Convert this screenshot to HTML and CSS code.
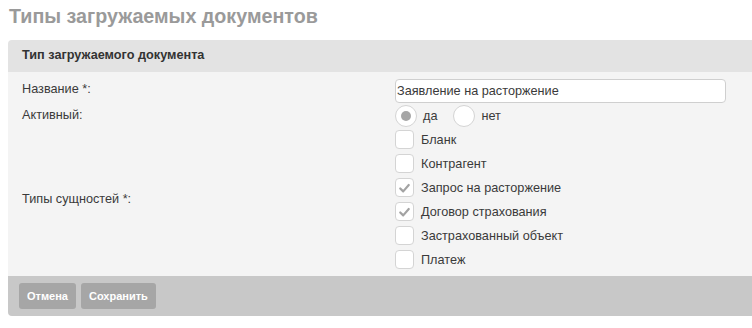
FILE: index.html
```html
<!DOCTYPE html>
<html lang="ru">
<head>
<meta charset="utf-8">
<link rel="stylesheet" href="styles.css">
</head>
<body>
<h1 class="page-title">Типы загружаемых документов</h1>
<div class="panel">
  <div class="panel-head">Тип загружаемого документа</div>
  <div class="panel-body">
    <div class="label">Название *:</div>
    <div class="field"><input class="text-input" type="text" value="Заявление на расторжение"></div>

    <div class="label">Активный:</div>
    <div class="field radios">
      <span class="radio on"></span><span class="opt">да</span>
      <span class="radio"></span><span class="opt">нет</span>
    </div>

    <div class="label center">Типы сущностей *:</div>
    <div class="field checks">
      <div class="check-row"><span class="box"></span><span class="opt">Бланк</span></div>
      <div class="check-row"><span class="box"></span><span class="opt">Контрагент</span></div>
      <div class="check-row"><span class="box checked"><svg viewBox="0 0 20 20" width="20" height="20"><path d="M5 10.5 L8.5 14 L15 6.5" fill="none" stroke="#a3a3a3" stroke-width="2.6" stroke-linecap="round" stroke-linejoin="round"/></svg></span><span class="opt">Запрос на расторжение</span></div>
      <div class="check-row"><span class="box checked"><svg viewBox="0 0 20 20" width="20" height="20"><path d="M5 10.5 L8.5 14 L15 6.5" fill="none" stroke="#a3a3a3" stroke-width="2.6" stroke-linecap="round" stroke-linejoin="round"/></svg></span><span class="opt">Договор страхования</span></div>
      <div class="check-row"><span class="box"></span><span class="opt">Застрахованный объект</span></div>
      <div class="check-row"><span class="box"></span><span class="opt">Платеж</span></div>
    </div>
  </div>
  <div class="panel-foot">
    <button class="btn">Отмена</button>
    <button class="btn">Сохранить</button>
  </div>
</div>
</body>
</html>
```
FILE: styles.css
```css
html, body {
  margin: 0;
  padding: 0;
  background: #fff;
  font-family: "Liberation Sans", Arial, sans-serif;
  color: #333;
  overflow: hidden;
}
body {
  padding: 0 0 0 8px;
}
.page-title {
  margin: 0;
  padding: 4px 0 0 1px;
  height: 36px;
  box-sizing: border-box;
  font-size: 19.7px;
  font-weight: bold;
  color: #9a9a9a;
  line-height: 24px;
}
.panel {
  width: 780px;
  border-radius: 4px;
  overflow: hidden;
  margin-top: 4px;
}
.panel-head {
  background: #e3e3e3;
  height: 32px;
  line-height: 30px;
  padding-left: 14px;
  font-size: 12.7px;
  font-weight: bold;
  color: #333;
}
.panel-body {
  background: #f4f4f4;
  display: grid;
  grid-template-columns: 373px 1fr;
  row-gap: 2px;
  padding: 7px 0 6px 14px;
}
.label {
  font-size: 12.7px;
  color: #3a3a3a;
  line-height: 20px;
}
.label.center {
  align-self: center;
  padding-bottom: 2px;
}
.text-input {
  width: 331px;
  height: 24px;
  box-sizing: border-box;
  border: 1px solid #cfcfcf;
  border-radius: 4px;
  background: #fff;
  font-family: "Liberation Sans", Arial, sans-serif;
  font-size: 12.7px;
  color: #3a3a3a;
  padding: 0 1px;
  margin: 0;
  outline: none;
}
.radios {
  display: flex;
  align-items: center;
  height: 22px;
}
.radio {
  width: 20px;
  height: 20px;
  border: 1px solid #d4d4d4;
  border-radius: 50%;
  background: #fff;
  display: flex;
  align-items: center;
  justify-content: center;
  flex: none;
}
.radio.on::after {
  content: "";
  width: 10px;
  height: 10px;
  border-radius: 50%;
  background: #a6a6a6;
}
.opt {
  font-size: 12.7px;
  color: #3a3a3a;
  margin-left: 6px;
}
.radios .opt:nth-of-type(2) {
  margin-right: 16px;
}
.checks {
  display: flex;
  flex-direction: column;
  gap: 3px;
}
.check-row {
  display: flex;
  align-items: center;
  height: 21px;
}
.box {
  width: 19px;
  height: 19px;
  box-sizing: border-box;
  border: 1px solid #d4d4d4;
  border-radius: 4px;
  background: #fff;
  flex: none;
  display: flex;
  align-items: center;
  justify-content: center;
  margin-right: 1px;
}
.box svg {
  width: 18px;
  height: 18px;
}
.panel-foot {
  background: #c8c8c8;
  height: 40px;
  display: flex;
  align-items: center;
  gap: 5px;
  padding-left: 11px;
}
.btn {
  background: #a6a6a6;
  border: none;
  border-radius: 3px;
  color: #fff;
  font-family: "Liberation Sans", Arial, sans-serif;
  font-size: 11px;
  font-weight: bold;
  height: 26px;
  padding: 0 8px;
  margin: 0;
}
```
